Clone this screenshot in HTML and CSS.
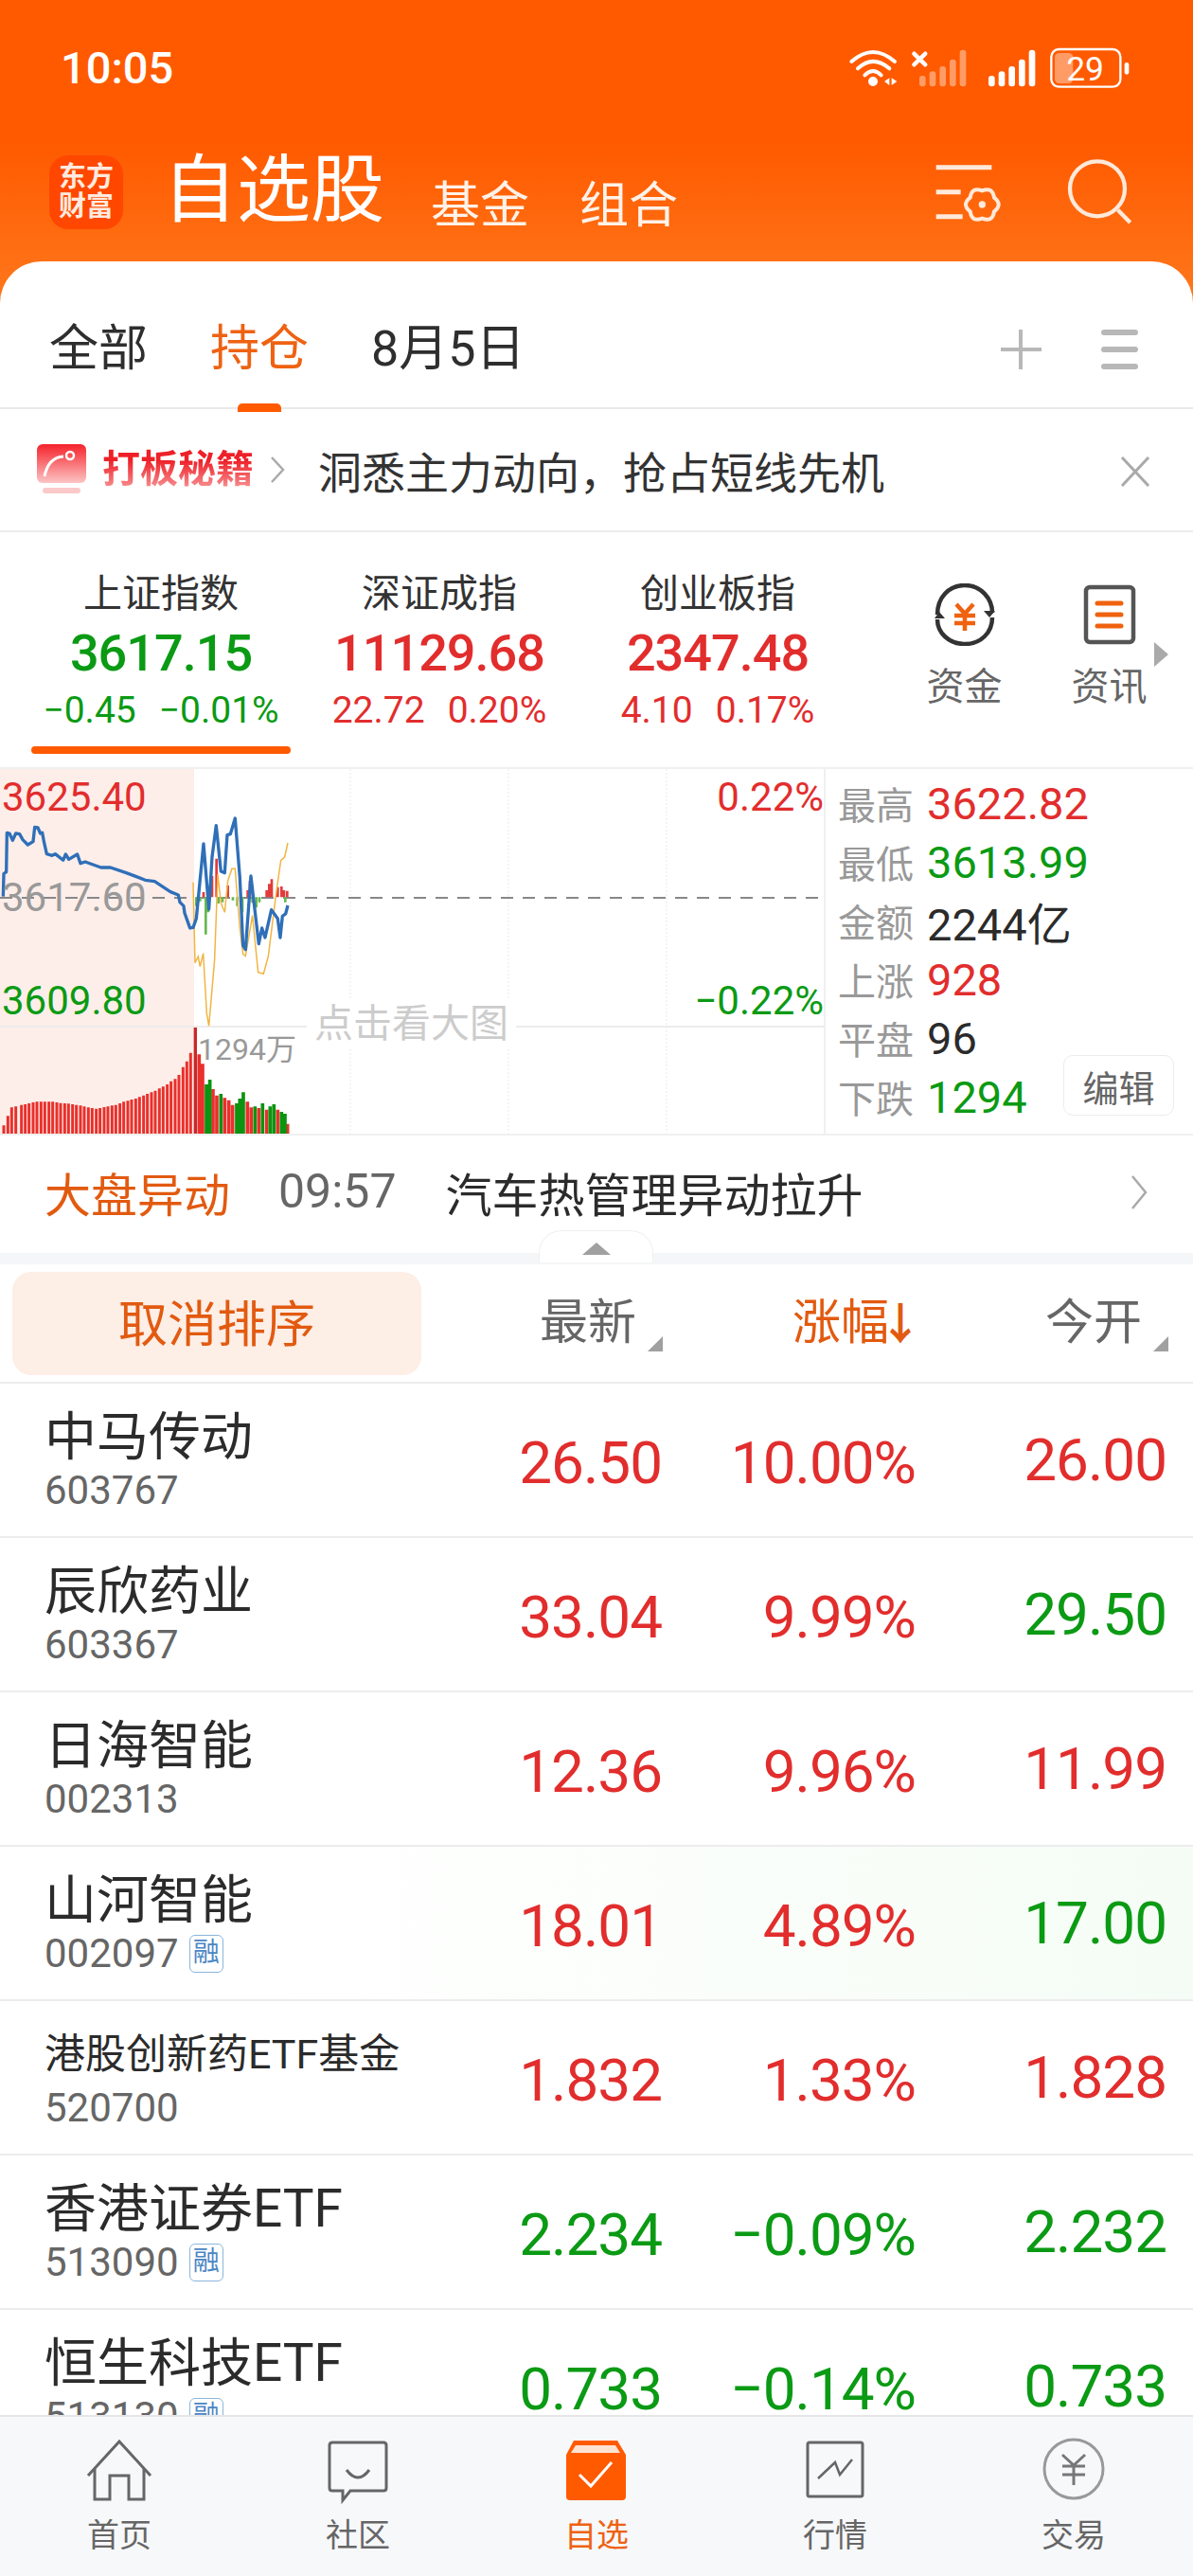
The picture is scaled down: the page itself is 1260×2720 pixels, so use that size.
FILE: index.html
```html
<!DOCTYPE html>
<html lang="zh-CN">
<head>
  <meta charset="UTF-8" />
  <meta name="viewport" content="width=device-width, initial-scale=1.0"/>
  <title>自选股</title>
  <link rel="stylesheet" href="styles.css">
</head>
<body>
<div class="app">
  <div class="status">
    <span class="time">10:05</span>
    <svg class="status-icons" viewBox="0 0 1200 330" width="400" height="110">
      <g fill="none" stroke="#fff" stroke-width="12" stroke-linecap="round">
        <path d="M118 195Q186 135 255 195"/>
        <path d="M138 217Q186 172 238 217"/>
        <path d="M160 238Q186 212 212 238"/>
        <path d="M316 170L352 205M352 170L316 205" stroke-width="13"/>
      </g>
      <circle cx="186" cy="258" r="15" fill="#fff"/>
      <path d="M238 247V270L222 258ZM245 247V270L262 258Z" fill="#fff"/>
      <g fill="#fff" opacity=".4">
        <rect x="333" y="240" width="20" height="34" rx="9"/>
        <rect x="365" y="226" width="20" height="48" rx="9"/>
        <rect x="397" y="210" width="20" height="64" rx="9"/>
        <rect x="429" y="188" width="20" height="86" rx="9"/>
        <rect x="461" y="158" width="20" height="116" rx="9"/>
      </g>
      <g fill="#fff">
        <rect x="552" y="240" width="20" height="34" rx="9"/>
        <rect x="584" y="226" width="20" height="48" rx="9"/>
        <rect x="616" y="210" width="20" height="64" rx="9"/>
        <rect x="648" y="188" width="20" height="86" rx="9"/>
        <rect x="680" y="158" width="20" height="116" rx="9"/>
        <rect x="983" y="198" width="14" height="38" rx="7"/>
      </g>
      <rect x="762" y="168" width="58" height="96" rx="14" fill="#fff" opacity=".4"/>
      <rect x="751" y="156" width="219" height="119" rx="24" fill="none" stroke="#fff" stroke-width="7"/>
      <text x="858" y="256" class="batt-text">29</text>
    </svg>
  </div>

  <div class="topbar">
    <div class="logo"><span>东方</span><span>财富</span></div>
    <div class="page-title">自选股</div>
    <div class="top-link">基金</div>
    <div class="top-link">组合</div>
    <svg class="top-icons" viewBox="0 0 840 330" width="280" height="110">
      <g fill="none" stroke="#ffe9da" stroke-width="15">
        <path d="M86 80H262M86 158H164M86 236H170"/>
        <path d="M270 176Q298 198 270 220Q265 255 232 242Q199 255 194 220Q166 198 194 176Q199 141 232 154Q265 141 270 176Z" stroke-width="12"/>
        <circle cx="597" cy="148" r="87" stroke-width="13"/>
        <path d="M662 215L701 255" stroke-width="13"/>
      </g>
      <circle cx="232" cy="198" r="11" fill="#ffe9da"/>
    </svg>
  </div>

  <div class="card">
    <div class="tabs">
      <span class="tab">全部</span>
      <span class="tab active">持仓</span>
      <span class="tab">8月5日</span>
      <svg class="tab-icons" viewBox="0 0 160 46" width="160" height="46">
        <path d="M21 2V44M0 23H43" stroke="#b8b8b8" stroke-width="4" fill="none"/>
        <path d="M109 5H142M109 23H142M109 41H142" stroke="#b8b8b8" stroke-width="6" stroke-linecap="round" fill="none"/>
      </svg>
    </div>

    <div class="banner">
      <svg class="banner-icon" viewBox="0 0 52 54" width="52" height="54">
        <defs>
          <linearGradient id="bannerRed" x1="0" y1="0" x2="0" y2="1">
            <stop offset="0" stop-color="#f5222a"/>
            <stop offset="1" stop-color="#fcc4c4"/>
          </linearGradient>
        </defs>
        <rect x="0" y="0" width="52" height="41" rx="6" fill="url(#bannerRed)"/>
        <rect x="6" y="46" width="40" height="6" rx="3" fill="#fbc9c9"/>
        <path d="M8 34Q12 14 28 13" fill="none" stroke="#fff" stroke-width="3"/>
        <circle cx="35" cy="12" r="4" fill="none" stroke="#fff" stroke-width="2.5"/>
      </svg>
      <span class="banner-tag">打板秘籍</span>
      <svg class="banner-arrow" viewBox="0 0 16 28" width="16" height="28"><path d="M2 1L14 14L2 27" fill="none" stroke="#aaa" stroke-width="2.5"/></svg>
      <span class="banner-text">洞悉主力动向，抢占短线先机</span>
      <svg class="banner-close" viewBox="0 0 32 32" width="32" height="32"><path d="M2 1L30 31M30 1L2 31" fill="none" stroke="#aaa" stroke-width="3"/></svg>
    </div>

    <div class="indexes">
      <div class="idx selected">
        <div class="idx-name">上证指数</div>
        <div class="idx-value green">3617.15</div>
        <div class="idx-change green"><span>−0.45</span><span>−0.01%</span></div>
      </div>
      <div class="idx">
        <div class="idx-name">深证成指</div>
        <div class="idx-value red">11129.68</div>
        <div class="idx-change red"><span>22.72</span><span>0.20%</span></div>
      </div>
      <div class="idx">
        <div class="idx-name">创业板指</div>
        <div class="idx-value red">2347.48</div>
        <div class="idx-change red"><span>4.10</span><span>0.17%</span></div>
      </div>
      <div class="quick first">
        <svg viewBox="0 0 64 66" width="64" height="66">
          <path d="M3 33C3 15 15 2 32 2C49 2 61 16 61 31" fill="none" stroke="#333" stroke-width="4.5"/>
          <path d="M61 36C61 52 49 64 32 64C15 64 3 52 3 38" fill="none" stroke="#333" stroke-width="4.5"/>
          <path d="M52 29H64L58 36Z" fill="#333"/>
          <path d="M0 37H11L5 30Z" fill="#333"/>
          <path d="M23 22L32 32L41 22M21 34H43M21 42H43M32 32V50" fill="none" stroke="#f0620f" stroke-width="4.5"/>
        </svg>
        <span>资金</span>
      </div>
      <div class="quick">
        <svg viewBox="0 0 64 66" width="64" height="66">
          <rect x="7" y="4" width="50" height="58" rx="4" fill="none" stroke="#555" stroke-width="4.5"/>
          <path d="M19 21H44M19 33H44M19 45H44" stroke="#f0620f" stroke-width="5" fill="none" stroke-linecap="round"/>
        </svg>
        <span>资讯</span>
      </div>
      <div class="more-arrow"></div>
    </div>

    <div class="chart">
      <div class="canvas">
        <svg viewBox="0 0 870 385" width="870" height="385">
          <rect x="0" y="0" width="205" height="385" fill="#fdeee9"/>
          <path d="M370 0V385M537 0V385M704 0V385" stroke="#f1f1f1" stroke-width="1.5" stroke-dasharray="2 2" fill="none"/>
          <path d="M0 272H870" stroke="#ececec" stroke-width="2"/>
          <path d="M0 136H870" stroke="#888" stroke-width="2" stroke-dasharray="13 10"/>
          <g transform="translate(0,-2) scale(.3333)" fill="none">
            <!-- macd bars -->
            <path d="M645 412V396M672 412V345M686 412V290M722 412V375M785 412V390M792 412V360M845 412V390M853 412V370M861 412V355M880 412V380M892 412V378M900 412V390M910 412V392" stroke="#e23b3b" stroke-width="8"/>
            <path d="M622 412V440M634 412V425M652 412V530M660 412V460M692 412V432M705 412V428M738 412V422M752 412V440M768 412V460M800 412V430M812 412V445M822 412V428M904 412V428" stroke="#66b84f" stroke-width="8"/>
            <!-- avg line -->
            <polyline stroke="#f2b544" stroke-width="4.5" points="612,365 618,620 628,600 634,632 644,590 655,780 662,820 680,610 690,340 700,430 712,460 722,360 735,322 745,322 760,510 770,592 778,598 800,470 818,650 835,655 850,600 875,400 890,295 902,285 912,240"/>
            <!-- price line -->
            <polyline stroke="#2f6fb8" stroke-width="10" stroke-linejoin="round" points="10,410 12,338 20,332 22,208 30,210 40,232 50,210 62,212 72,230 88,246 105,236 110,190 120,192 128,210 134,208 140,240 148,275 165,280 175,275 200,295 208,276 218,292 245,276 255,305 270,300 320,318 350,318 400,335 440,350 460,358 490,362 540,395 565,405 570,428 582,440 585,462 595,490 602,510 612,508 622,480 645,243 662,450 672,285 685,185 700,330 712,335 720,215 730,212 745,162 760,350 770,565 778,578 795,345 820,560 830,510 840,540 860,452 880,480 888,540 895,472 905,465 912,438"/>
            <!-- volume -->
            <path stroke="#e8302c" stroke-width="9" d="M12 1161V1135M25 1161V1105M37 1161V1078M50 1161V1075M68 1161V1070M80 1161V1068M92 1161V1065M105 1161V1062M117 1161V1060M130 1161V1060M142 1161V1060M155 1161V1060M167 1161V1060M180 1161V1062M192 1161V1064M205 1161V1065M217 1161V1066M230 1161V1068M242 1161V1070M255 1161V1072M267 1161V1075M280 1161V1078M292 1161V1080M305 1161V1082M317 1161V1080M330 1161V1077M342 1161V1075M355 1161V1072M367 1161V1070M380 1161V1065M392 1161V1060M405 1161V1057M417 1161V1053M430 1161V1050M442 1161V1045M455 1161V1040M467 1161V1035M480 1161V1030M492 1161V1025M505 1161V1018M517 1161V1012M530 1161V1005M542 1161V995M555 1161V988M567 1161V975M580 1161V950M592 1161V932M604 1161V905"/>
            <path stroke="#c8282a" stroke-width="10" d="M619 1161V825"/>
            <path stroke="#e8302c" stroke-width="11" d="M631 1161V910M642 1161V940M675 1161V1020M687 1161V1040M712 1161V1048M725 1161V1055M737 1161V1070M784 1161V1060M796 1161V1078M820 1161V1080M845 1161V1085M880 1161V1085M911 1161V1130"/>
            <path stroke="#0c9310" stroke-width="11" d="M654 1161V1005M665 1161V990M700 1161V1035M750 1161V1065M760 1161V1050M771 1161V1030M808 1161V1075M832 1161V1065M856 1161V1075M868 1161V1068M892 1161V1092M903 1161V1098"/>
          </g>
        </svg>
        <span class="tag hi red">3625.40</span>
        <span class="tag mid">3617.60</span>
        <span class="tag lo green">3609.80</span>
        <span class="tag pct-hi red">0.22%</span>
        <span class="tag pct-lo green">−0.22%</span>
        <span class="vol-tag">1294万</span>
        <span class="big-hint">点击看大图</span>
      </div>
      <div class="stats">
        <div class="stat"><label>最高</label><b class="red">3622.82</b></div>
        <div class="stat"><label>最低</label><b class="green">3613.99</b></div>
        <div class="stat"><label>金额</label><b>2244亿</b></div>
        <div class="stat"><label>上涨</label><b class="red">928</b></div>
        <div class="stat"><label>平盘</label><b>96</b></div>
        <div class="stat"><label>下跌</label><b class="green">1294</b></div>
        <div class="edit-btn">编辑</div>
      </div>
    </div>

    <div class="alert">
      <span class="alert-tag">大盘异动</span>
      <span class="alert-time">09:57</span>
      <span class="alert-text">汽车热管理异动拉升</span>
      <svg class="alert-arrow" viewBox="0 0 18 36" width="18" height="36"><path d="M2 1L16 18L2 35" fill="none" stroke="#aaa" stroke-width="2.5"/></svg>
    </div>
    <div class="divider"><div class="handle"><i></i></div></div>

    <div class="list-head">
      <div class="sort-btn">取消排序</div>
      <div class="head-col sortable">最新</div>
      <div class="head-col on">涨幅<em>↓</em></div>
      <div class="head-col sortable">今开</div>
    </div>

    <div class="list">
      <div class="row">
        <div class="stock"><div class="stock-name">中马传动</div><div class="stock-code">603767</div></div>
        <div class="num red">26.50</div><div class="num red">10.00%</div><div class="num open red">26.00</div>
      </div>
      <div class="row">
        <div class="stock"><div class="stock-name">辰欣药业</div><div class="stock-code">603367</div></div>
        <div class="num red">33.04</div><div class="num red">9.99%</div><div class="num open green">29.50</div>
      </div>
      <div class="row">
        <div class="stock"><div class="stock-name">日海智能</div><div class="stock-code">002313</div></div>
        <div class="num red">12.36</div><div class="num red">9.96%</div><div class="num open red">11.99</div>
      </div>
      <div class="row flash">
        <div class="stock"><div class="stock-name">山河智能</div><div class="stock-code">002097<span class="rong">融</span></div></div>
        <div class="num red">18.01</div><div class="num red">4.89%</div><div class="num open green">17.00</div>
      </div>
      <div class="row">
        <div class="stock"><div class="stock-name small">港股创新药ETF基金</div><div class="stock-code">520700</div></div>
        <div class="num red">1.832</div><div class="num red">1.33%</div><div class="num open red">1.828</div>
      </div>
      <div class="row">
        <div class="stock"><div class="stock-name">香港证券ETF</div><div class="stock-code">513090<span class="rong">融</span></div></div>
        <div class="num green">2.234</div><div class="num green">−0.09%</div><div class="num open green">2.232</div>
      </div>
      <div class="row">
        <div class="stock"><div class="stock-name">恒生科技ETF</div><div class="stock-code">513130<span class="rong">融</span></div></div>
        <div class="num green">0.733</div><div class="num green">−0.14%</div><div class="num open green">0.733</div>
      </div>
    </div>

    <div class="tabbar">
      <div class="nav">
        <svg viewBox="0 0 72 72" width="72" height="72" fill="none" stroke="#666" stroke-width="3">
          <path d="M3 42L36 6L69 42"/>
          <path d="M10 35V67H26V42H46V67H62V35"/>
        </svg>
        <span>首页</span>
      </div>
      <div class="nav">
        <svg viewBox="0 0 72 72" width="72" height="72" fill="none" stroke="#666" stroke-width="3">
          <path d="M9 7H63Q66 7 66 10V55Q66 58 63 58H28L20 68V58H9Q6 58 6 55V10Q6 7 9 7Z"/>
          <path d="M24 36Q36 52 48 36"/>
        </svg>
        <span>社区</span>
      </div>
      <div class="nav on">
        <svg viewBox="0 0 72 72" width="72" height="72">
          <path d="M12 5H58L67 20V64Q67 68 63 68H8Q4 68 4 64V20Z" fill="#ff5a00"/>
          <path d="M14 10H56L61 18H9Z" fill="#ffe3d2"/>
          <path d="M18 41L30 53L52 28" fill="none" stroke="#fff" stroke-width="3"/>
        </svg>
        <span>自选</span>
      </div>
      <div class="nav">
        <svg viewBox="0 0 72 72" width="72" height="72" fill="none" stroke="#666" stroke-width="3">
          <rect x="7" y="7" width="58" height="57" rx="2"/>
          <path d="M18 45L36 28L41 41L54 25" stroke-width="2.5"/>
        </svg>
        <span>行情</span>
      </div>
      <div class="nav">
        <svg viewBox="0 0 72 72" width="72" height="72" fill="none" stroke="#777" stroke-width="3">
          <circle cx="36" cy="35" r="31" stroke="#999"/>
          <path d="M24 20L36 31L48 20M24 32H48M24 41H48M36 31V52"/>
        </svg>
        <span>交易</span>
      </div>
    </div>
  </div>
</div>
</body>
</html>
```

FILE: styles.css
```css
* {
  box-sizing: border-box;
}
body {
  margin: 0;
  font-family: Roboto, "Noto Sans CJK SC", sans-serif;
  color: #2b2b2b;
}
.app {
  width: 1260px;
  height: 2720px;
  overflow: hidden;
  display: flex;
  flex-direction: column;
  background: linear-gradient(#ff5a00 0, #ff5a00 150px, #ff7419 300px);
}
.red { color: #e22d2d; }
.green { color: #0b9a14; }

/* status bar */
.status {
  height: 110px;
  display: flex;
  justify-content: space-between;
  align-items: flex-start;
  flex-shrink: 0;
}
.time {
  margin: 44px 0 0 64px;
  font-size: 47px;
  line-height: 56px;
  color: #fff;
  font-weight: 500;
}
.status-icons {
  display: block;
}
.batt-text {
  font-size: 106px;
  fill: #fff;
  text-anchor: middle;
}

/* header */
.topbar {
  height: 166px;
  padding: 54px 0 0 52px;
  display: flex;
  align-items: flex-start;
  color: #fff;
  position: relative;
  flex-shrink: 0;
}
.logo {
  width: 78px;
  height: 78px;
  border-radius: 20px;
  background: #ff4700;
  color: #ffeadf;
  font-size: 29px;
  line-height: 31px;
  font-weight: 700;
  display: flex;
  flex-direction: column;
  align-items: center;
  justify-content: center;
}
.page-title {
  font-size: 78px;
  line-height: 84px;
  margin: -4px 49px 0 42px;
}
.top-link {
  font-size: 52px;
  line-height: 60px;
  margin: 24px 53px 0 0;
  color: #fff2e8;
}
.top-icons {
  position: absolute;
  left: 960px;
  top: 40px;
}

/* card */
.card {
  flex: 1;
  min-height: 0;
  background: #fff;
  border-radius: 44px 44px 0 0;
  display: flex;
  flex-direction: column;
}
.tabs {
  height: 156px;
  padding: 31px 0 0 52px;
  display: flex;
  align-items: center;
  gap: 66px;
  border-bottom: 2px solid #e9e9e9;
  position: relative;
  flex-shrink: 0;
}
.tab {
  font-size: 52px;
  line-height: 60px;
  color: #2e2e2e;
}
.tab.active {
  color: #ee6212;
  position: relative;
}
.tab.active::after {
  content: "";
  position: absolute;
  left: 29px;
  width: 46px;
  top: 87px;
  height: 9px;
  border-radius: 5px 5px 0 0;
  background: #ff5a00;
}
.tab-icons {
  position: absolute;
  left: 1057px;
  top: 70px;
}

/* banner */
.banner {
  height: 130px;
  padding-left: 39px;
  display: flex;
  align-items: center;
  border-bottom: 2px solid #ececec;
  position: relative;
  flex-shrink: 0;
}
.banner-tag {
  margin-left: 17px;
  font-size: 40px;
  line-height: 50px;
  font-weight: 700;
  background: linear-gradient(#ee2028 30%, #f9a6a6 100%);
  -webkit-background-clip: text;
  background-clip: text;
  color: transparent;
}
.banner-arrow {
  margin-left: 17px;
}
.banner-text {
  margin-left: 35px;
  font-size: 46px;
  color: #333;
}
.banner-close {
  position: absolute;
  left: 1183px;
  top: 50px;
}

/* indexes */
.indexes {
  height: 248px;
  padding-left: 23px;
  display: flex;
  position: relative;
  flex-shrink: 0;
}
.idx {
  width: 294px;
  padding-top: 36px;
  text-align: center;
  position: relative;
}
.idx.selected::after {
  content: "";
  position: absolute;
  left: 10px;
  width: 274px;
  top: 226px;
  height: 8px;
  border-radius: 4px;
  background: #ff5a00;
}
.idx-name {
  font-size: 41px;
  line-height: 58px;
  color: #333;
}
.idx-value {
  margin-top: 3px;
  font-size: 54px;
  letter-spacing: -1px;
  line-height: 62px;
  font-weight: 500;
}
.idx-change {
  margin-top: 4px;
  font-size: 39px;
  line-height: 50px;
  display: flex;
  justify-content: center;
  gap: 24px;
}
.quick {
  width: 153px;
  padding-top: 54px;
  display: flex;
  flex-direction: column;
  align-items: center;
  font-size: 40px;
  line-height: 48px;
  color: #666;
}
.quick.first {
  margin-left: 37px;
}
.quick span {
  margin-top: 20px;
}
.more-arrow {
  position: absolute;
  left: 1219px;
  top: 116px;
  border-left: 15px solid #aaa;
  border-top: 13px solid transparent;
  border-bottom: 13px solid transparent;
}

/* chart */
.chart {
  height: 387px;
  display: flex;
  border-top: 2px solid #f0f0f0;
  flex-shrink: 0;
}
.canvas {
  width: 870px;
  height: 385px;
  position: relative;
}
.canvas svg {
  display: block;
}
.tag {
  position: absolute;
  font-size: 42px;
  line-height: 50px;
}
.hi { left: 2px; top: 5px; }
.mid { left: 2px; top: 111px; color: #999; }
.lo { left: 2px; top: 220px; }
.pct-hi { right: 0; top: 5px; }
.pct-lo { right: 0; top: 220px; }
.vol-tag {
  position: absolute;
  left: 209px;
  top: 275px;
  font-size: 32px;
  line-height: 42px;
  color: #999;
}
.big-hint {
  position: absolute;
  left: 324px;
  top: 242px;
  padding: 0 8px;
  background: #fff;
  font-size: 41px;
  line-height: 54px;
  color: #ccc;
}
.stats {
  flex: 1;
  padding: 5px 0 0 13px;
  border-left: 2px solid #f0f0f0;
  position: relative;
}
.stat {
  height: 62px;
  display: flex;
  align-items: center;
}
.stat label {
  width: 94px;
  font-size: 40px;
  color: #999;
}
.stat b {
  font-size: 47px;
  font-weight: 400;
}
.edit-btn {
  position: absolute;
  left: 251px;
  top: 302px;
  width: 117px;
  height: 64px;
  border: 1.5px solid #ececec;
  border-radius: 10px;
  display: flex;
  align-items: center;
  justify-content: center;
  font-size: 38px;
  color: #666;
}

/* alert strip */
.alert {
  height: 126px;
  padding: 0 48px 6px 47px;
  display: flex;
  align-items: center;
  border-top: 2px solid #f0f0f0;
  position: relative;
  flex-shrink: 0;
}
.alert-tag {
  font-size: 49px;
  color: #e25a10;
}
.alert-time {
  margin-left: 51px;
  font-size: 50px;
  color: #666;
}
.alert-text {
  margin-left: 52px;
  font-size: 49px;
  color: #2b2b2b;
}
.alert-arrow {
  position: absolute;
  left: 1194px;
  top: 42px;
}
.divider {
  height: 12px;
  background: #f5f6f8;
  position: relative;
  flex-shrink: 0;
}
.handle {
  position: absolute;
  left: 569px;
  top: -24px;
  width: 121px;
  height: 34px;
  background: #fff;
  border: 1.5px solid #f0f0f0;
  border-bottom: 0;
  border-radius: 24px 24px 0 0;
}
.handle i {
  position: absolute;
  left: 45px;
  top: 12px;
  border-bottom: 13px solid #a0a0a0;
  border-left: 15px solid transparent;
  border-right: 15px solid transparent;
}

/* list */
.list-head,
.row {
  display: grid;
  align-items: center;
}
.list-head {
  height: 126px;
  padding-left: 13px;
  grid-template-columns: 434px 253px 267px 267px;
  border-bottom: 2px solid #ececec;
  flex-shrink: 0;
}
.sort-btn {
  width: 432px;
  height: 109px;
  border-radius: 20px;
  background: #fdeee6;
  color: #e25a10;
  font-size: 52px;
  padding-bottom: 6px;
  display: flex;
  align-items: center;
  justify-content: center;
}
.head-col {
  position: relative;
  text-align: right;
  font-size: 51px;
  line-height: 60px;
  color: #666;
}
.head-col.sortable {
  padding-right: 28px;
}
.head-col.sortable::after {
  content: "";
  position: absolute;
  right: 0;
  bottom: 0;
  border-bottom: 16px solid #a0a0a0;
  border-left: 16px solid transparent;
}
.head-col.on {
  color: #e25a10;
}
.head-col.on em {
  font-style: normal;
  font-weight: 700;
  font-size: 46px;
  margin-left: -11px;
  margin-right: -7px;
}
.list {
  flex: 1;
  min-height: 0;
  overflow: hidden;
}
.row {
  height: 163px;
  padding-left: 47px;
  grid-template-columns: 400px 252px 268px 265px;
  border-bottom: 2px solid #ececec;
}
.row.flash {
  background: linear-gradient(90deg, #fff 24%, #fafefa 60%, #f5fcf5 100%);
}
.stock {
  align-self: start;
  padding-top: 24px;
}
.stock-name {
  font-size: 55px;
  line-height: 64px;
  color: #2b2b2b;
}
.stock-name.small {
  font-size: 43px;
}
.stock-code {
  font-size: 42px;
  line-height: 50px;
  color: #666;
  display: flex;
  align-items: center;
}
.rong {
  margin-left: 11px;
  width: 36px;
  height: 40px;
  border: 1.5px solid #8ab6dc;
  border-radius: 6px;
  color: #4a86c5;
  font-size: 28px;
  line-height: 36px;
  text-align: center;
}
.num {
  text-align: right;
  font-size: 62px;
  letter-spacing: -1px;
  line-height: 70px;
  padding-top: 7px;
}
.num.open {
  padding-top: 0;
}

/* bottom nav */
.tabbar {
  height: 170px;
  padding-top: 20px;
  display: flex;
  background: #f7f8fa;
  border-top: 2px solid #e6e6e8;
  flex-shrink: 0;
}
.nav {
  width: 252px;
  display: flex;
  flex-direction: column;
  align-items: center;
  font-size: 34px;
  color: #666;
}
.nav span {
  margin-top: 10px;
  line-height: 46px;
}
.nav.on {
  color: #ee6212;
}
```
